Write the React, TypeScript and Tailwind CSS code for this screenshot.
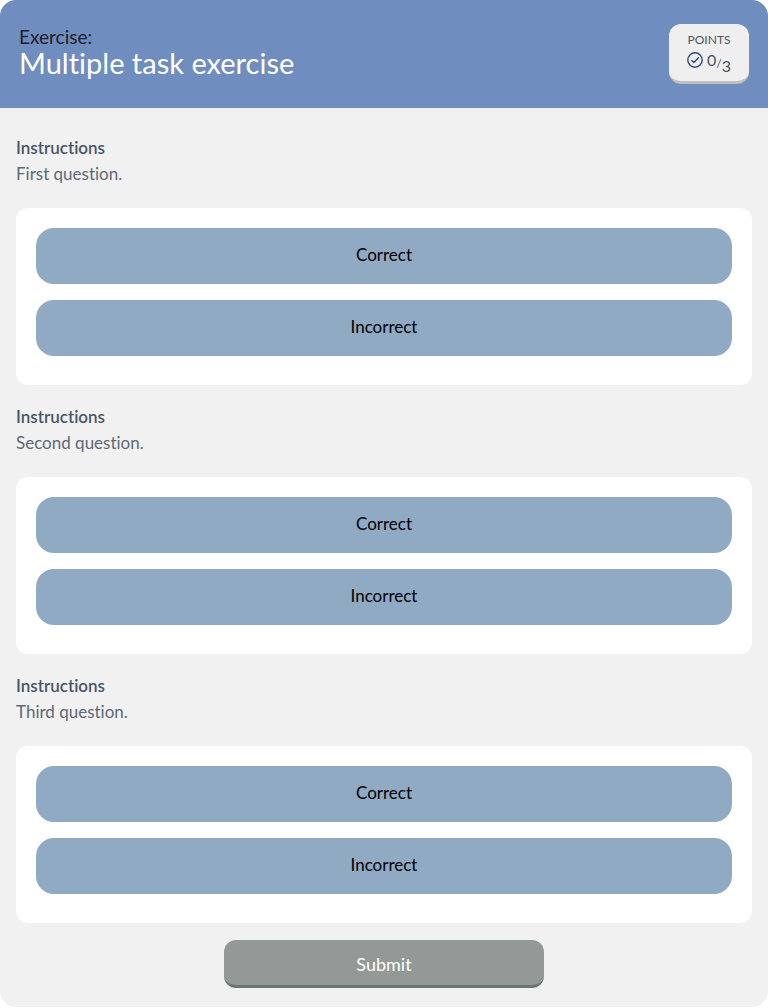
const questions = ["First question.", "Second question.", "Third question."];
const options = ["Correct", "Incorrect"];

function PointsBadge() {
  return (
    <div className="flex h-[60px] w-20 flex-col items-center rounded-xl border-b-[3px] border-[#bfbfbf] bg-[#efefef] pt-2 text-[#4a5568]">
      <span className="text-xs leading-4">POINTS</span>
      <div className="flex items-start gap-1 pt-1">
        <svg
          className="size-4"
          viewBox="0 0 16 16"
          fill="none"
          stroke="#2f4a7d"
          strokeWidth="1.4"
          strokeLinecap="round"
          strokeLinejoin="round"
          aria-hidden="true"
        >
          <circle cx="8" cy="8" r="7.2" />
          <path d="M4.7 8.4l2.2 2.1 4.5-4.8" />
        </svg>
        <span className="flex text-base leading-4">
          <span>0</span>
          <span className="pt-1 text-xs leading-4">/</span>
          <span className="pt-1.5">3</span>
        </span>
      </div>
    </div>
  );
}

function Question({ text }: { text: string }) {
  return (
    <section>
      <h2 className="text-[17px] leading-[26px] font-semibold text-[#4a5568]">Instructions</h2>
      <p className="text-[17px] leading-[26px] text-[#5d6878]">{text}</p>
      <div className="mt-[21px] flex flex-col gap-4 rounded-xl bg-white px-5 pt-5 pb-[29px]">
        {options.map((option) => (
          <button
            key={option}
            type="button"
            className="h-14 w-full rounded-[18px] bg-[#91aac4] pb-0.5 text-[17px] leading-6 text-black"
          >
            {option}
          </button>
        ))}
      </div>
    </section>
  );
}

export default function App() {
  return (
    <main className="overflow-hidden rounded-2xl bg-[#f1f1f1] pb-[19px] font-[Lato,sans-serif] [font-variant-ligatures:none]">
      <header className="flex items-start justify-between bg-[#708dbf] px-[19px] py-6">
        <div>
          <p className="pt-px text-[19px] leading-6 text-[#1a202c]">Exercise:</p>
          <h1 className="text-[29px] leading-7 text-white">Multiple task exercise</h1>
        </div>
        <PointsBadge />
      </header>
      <div className="flex flex-col gap-[19px] px-4 pt-[27px]">
        {questions.map((text) => (
          <Question key={text} text={text} />
        ))}
      </div>
      <div className="flex justify-center pt-[17px]">
        <button
          type="button"
          className="h-12 w-80 rounded-xl border-b-[3px] border-[#6b7571] bg-[#929997] pt-0.5 text-lg leading-6 text-white"
        >
          Submit
        </button>
      </div>
    </main>
  );
}
